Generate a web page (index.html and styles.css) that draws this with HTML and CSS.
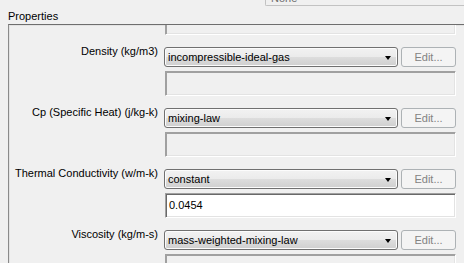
FILE: index.html
```html
<!DOCTYPE html>
<html lang="en">
<head>
  <meta charset="UTF-8" />
  <title>Material Properties</title>
  <link rel="stylesheet" href="styles.css">
</head>
<body>

  <div class="top-strip">
    <div class="none-field">None</div>
  </div>

  <div class="section-title">Properties</div>

  <div class="panel">
    <div class="value-box disabled first"></div>

    <div class="prop-row">
      <div class="prop-label">Density (kg/m3)</div>
      <div class="combo">incompressible-ideal-gas<span class="arrow"></span></div>
      <div class="edit-btn">Edit...</div>
    </div>
    <div class="value-box disabled"></div>

    <div class="prop-row">
      <div class="prop-label">Cp (Specific Heat) (j/kg-k)</div>
      <div class="combo">mixing-law<span class="arrow"></span></div>
      <div class="edit-btn">Edit...</div>
    </div>
    <div class="value-box disabled"></div>

    <div class="prop-row">
      <div class="prop-label">Thermal Conductivity (w/m-k)</div>
      <div class="combo">constant<span class="arrow"></span></div>
      <div class="edit-btn">Edit...</div>
    </div>
    <div class="value-box">0.0454</div>

    <div class="prop-row">
      <div class="prop-label">Viscosity (kg/m-s)</div>
      <div class="combo">mass-weighted-mixing-law<span class="arrow"></span></div>
      <div class="edit-btn">Edit...</div>
    </div>
    <div class="value-box disabled"></div>
  </div>

</body>
</html>
```

FILE: styles.css
```css
* {
  margin: 0;
  padding: 0;
  box-sizing: border-box;
}

html, body {
  height: 263px;
}

body {
  background: #f0f0f0;
  color: #000;
  font-family: 'Liberation Sans', Arial, sans-serif;
  font-size: 11px;
  line-height: 13px;
  overflow: hidden;
}

.top-strip {
  height: 6px;
  overflow: hidden;
}

.none-field {
  margin-left: 265px;
  margin-top: -15px;
  height: 21px;
  border: 1px solid #c2c2c2;
  border-right: none;
  border-radius: 0 0 0 2px;
  padding: 6px 0 0 5px;
  color: #6d6d6d;
}

.section-title {
  margin: 4px 0 1px 8px;
}

.panel {
  margin-left: 8px;
  height: 239px;
  border-top: 1px solid #6e6e6e;
  border-left: 1px solid #8a8a8a;
  box-shadow: inset 1px 1px #e3e3e3;
  overflow: hidden;
}

.prop-row {
  display: flex;
  align-items: flex-start;
  margin-top: 12px;
}

.prop-label {
  width: 149px;
  margin-top: -2px;
  margin-right: 6px;
  text-align: right;
  white-space: nowrap;
}

.combo {
  position: relative;
  width: 234px;
  height: 20px;
  margin-right: 3px;
  padding: 3px 0 0 3px;
  border: 1px solid #707070;
  border-radius: 3px;
  background: linear-gradient(#f2f2f2, #ebebeb 50%, #dddddd 51%, #cfcfcf);
  box-shadow: inset 0 0 0 1px #fcfcfc;
}

.arrow {
  position: absolute;
  right: 6px;
  top: 8px;
  border-left: 3.5px solid transparent;
  border-right: 3.5px solid transparent;
  border-top: 4px solid #000;
}

.edit-btn {
  width: 55px;
  height: 20px;
  padding-top: 3px;
  border: 1px solid #adb2b5;
  border-radius: 3px;
  background: #f4f4f4;
  color: #838383;
  text-align: center;
}

.value-box {
  width: 291px;
  height: 25px;
  margin: 4px 0 0 156px;
  padding: 5px 0 0 3px;
  border-top: 1px solid #a0a0a0;
  border-left: 1px solid #a0a0a0;
  border-bottom: 1px solid #fff;
  border-right: 1px solid #fff;
  background: #fff;
  box-shadow: inset 1px 1px #696969, inset -1px -1px #e3e3e3;
}

.value-box.disabled {
  background: #f0f0f0;
  box-shadow: inset 1px 1px #a0a0a0, inset -1px -1px #e3e3e3;
}

.value-box.first {
  margin-top: -15px;
}
```
